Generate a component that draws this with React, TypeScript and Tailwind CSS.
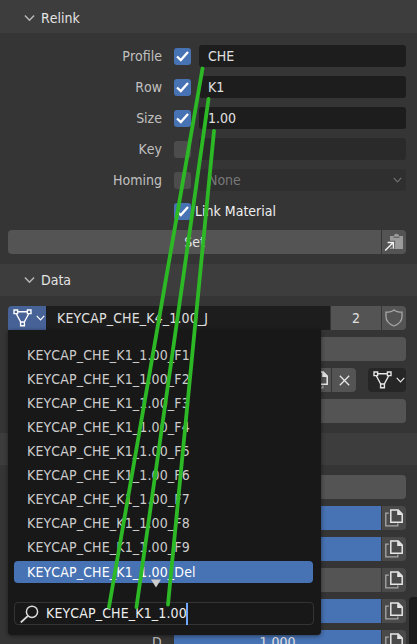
import type { ReactNode } from 'react';

const items = ['F1', 'F2', 'F3', 'F4', 'F5', 'F6', 'F7', 'F8', 'F9'];

function Chevron({ className = '' }: { className?: string }) {
  return (
    <svg className={className} viewBox="0 0 12 8" fill="none" stroke="currentColor" strokeWidth="1.6">
      <path d="M1 1.2 6 6.4 11 1.2" />
    </svg>
  );
}

function MeshIcon() {
  return (
    <svg className="h-[18px] w-[19px] shrink-0" viewBox="0 0 19 18" fill="none" stroke="currentColor" strokeWidth="1.4">
      <path d="M4.5 2.8h10M3.4 5l4.3 8M15.6 5l-4.3 8" />
      <path d="M1 1h3.6v3.6H1zM14.4 1H18v3.6h-3.6zM7.6 13h3.8v3.8H7.6z" />
    </svg>
  );
}

function CopyIcon() {
  return (
    <svg className="h-[18px] w-[18px] shrink-0" viewBox="0 0 18 18" fill="none">
      <path d="M3.8 4.2H.8v12.6h12v-2.2" stroke="#a8a8a8" strokeWidth="1.3" />
      <path d="M5.8 1h7.4l4 4v8.2H5.8z" stroke="#e6e6e6" strokeWidth="1.5" />
      <path d="M12.2.8v5.2h5.4z" fill="#e6e6e6" />
    </svg>
  );
}

function Header({ title, className }: { title: string; className: string }) {
  return (
    <div className={`flex w-full shrink-0 items-center bg-[#3d3d3d] pl-6 text-[#e4e4e4] ${className}`}>
      <Chevron className="mr-[6px] h-2 w-[11px] text-[#b8b8b8]" />
      <span>{title}</span>
    </div>
  );
}

function Check({ on }: { on: boolean }) {
  return (
    <div className={`flex h-[17px] w-[17px] shrink-0 items-center justify-center rounded-[3px] ${on ? 'bg-[#4772b3]' : 'bg-[#4c4c4c]'}`}>
      {on && (
        <svg className="h-[11px] w-[13px]" viewBox="0 0 13 11" fill="none" stroke="#fff" strokeWidth="2.3">
          <path d="M1 5.5 4.8 9 12 1" />
        </svg>
      )}
    </div>
  );
}

function PropRow({ label, on, children, field }: { label: string; on: boolean; children?: ReactNode; field: string }) {
  return (
    <div className="flex h-[22px] items-center">
      <div className="w-[162px] text-right text-[#c0c0c0]">{label}</div>
      <div className="ml-3">
        <Check on={on} />
      </div>
      <div className={`ml-2 flex h-[22px] w-[207px] items-center justify-between rounded-[3px] pr-1 pl-[9px] ${field}`}>{children}</div>
    </div>
  );
}

function SliderRow({ fill }: { fill: string }) {
  return (
    <div className="flex h-6 shrink-0 gap-px pr-[11px] pl-[174px]">
      <div className={`flex flex-1 items-center justify-center text-[#e4e4e4] ${fill}`}>1.000</div>
      <div className="flex w-6 items-center justify-center rounded-r-[4px] bg-[#4a4a4a]">
        <CopyIcon />
      </div>
    </div>
  );
}

export default function App() {
  return (
    <div className="relative h-[644px] w-[417px] overflow-hidden bg-[#353535] font-['DejaVu_Sans_Condensed','DejaVu_Sans',sans-serif] text-[14px] leading-none whitespace-nowrap [font-kerning:none] [font-stretch:condensed]">
      <div className="flex flex-col">
        <Header title="Relink" className="h-[33px] pt-[3px]" />
        <div className="flex flex-col gap-[9px] pt-3">
          <PropRow label="Profile" on field="bg-[#1d1d1d] text-[#e0e0e0]">CHE</PropRow>
          <PropRow label="Row" on field="bg-[#1d1d1d] text-[#e0e0e0]">K1</PropRow>
          <PropRow label="Size" on field="bg-[#1d1d1d] text-[#e0e0e0]">1.00</PropRow>
          <PropRow label="Key" on={false} field="bg-[#2a2a2a]" />
          <PropRow label="Homing" on={false} field="bg-[#2f2f2f] text-[#787878]">
            <span>None</span>
            <Chevron className="h-[6px] w-[9px] text-[#707070]" />
          </PropRow>
          <div className="flex h-[22px] items-center pl-[174px] text-[#f0f0f0]">
            <Check on />
            <span className="ml-1">Link Material</span>
          </div>
        </div>
        <div className="mt-2 flex h-6 gap-px pr-[11px] pl-2 text-[#e4e4e4]">
          <div className="flex flex-1 items-center justify-center rounded-l-[4px] bg-[#545454]">Set</div>
          <div className="flex w-6 items-center justify-center rounded-r-[4px] bg-[#545454]">
            <svg className="h-5 w-5" viewBox="0 0 20 20" fill="none">
              <path d="M6 4h4c0-3 5-3 5 0h4v13H6z" fill="#9b9b9b" />
              <path d="M9.5 5.2h6" stroke="#555" />
              <path d="m1.2 18.5 8-8M3.6 10.5h5.8v6" stroke="#545454" strokeWidth="3.4" />
              <path d="m1.2 18.5 8-8M3.6 10.5h5.8v6" stroke="#f0f0f0" strokeWidth="1.5" />
            </svg>
          </div>
        </div>
        <Header title="Data" className="mt-[10px] h-8" />
        <div className="mt-[10px] flex h-6 pr-[11px] pl-2 text-[#e0e0e0]">
          <div className="flex w-[38px] items-center gap-1 rounded-tl-[4px] bg-[#466297] pl-[5px] text-white">
            <MeshIcon />
            <Chevron className="h-[6px] w-[9px]" />
          </div>
          <div className="flex flex-1 items-center bg-[#1d1d1d] pl-[11px] tracking-[0.14px]">KEYCAP_CHE_K4_1.00_J</div>
          <div className="ml-px flex w-[50px] items-center justify-center bg-[#545454]">2</div>
          <div className="ml-px flex w-6 items-center justify-center rounded-r-[4px] bg-[#545454]">
            <svg className="h-[18px] w-[18px]" viewBox="0 0 18 18" fill="none" stroke="#a5a5a5" strokeWidth="1.3">
              <path d="M9 .9C7 2.6 4 3.1 1 3.1v4.5c0 4.8 3.6 7.8 8 9.4 4.4-1.6 8-4.6 8-9.4V3.1c-3 0-6-.5-8-2.2Z" />
            </svg>
          </div>
        </div>
        <div className="mt-[7px] mr-[11px] ml-2 h-6 rounded-[4px] bg-[#545454]" />
        <div className="mt-[7px] flex h-6 justify-end pr-[11px] text-[#e6e6e6]">
          <div className="flex w-6 items-center justify-end bg-[#545454] pr-[3px]">
            <CopyIcon />
          </div>
          <div className="ml-px flex w-6 items-center justify-center rounded-r-[4px] bg-[#545454]">
            <svg className="h-[11px] w-[11px]" viewBox="0 0 11 11" fill="none" stroke="currentColor" strokeWidth="1.3">
              <path d="m.8.8 9.4 9.4m0-9.4L.8 10.2" />
            </svg>
          </div>
          <div className="ml-3 flex w-[38px] items-center gap-1 rounded-[4px] bg-[#262626] pl-[5px]">
            <MeshIcon />
            <Chevron className="h-[6px] w-[9px]" />
          </div>
        </div>
        <div className="mt-[7px] mr-[11px] ml-2 h-6 rounded-[4px] bg-[#545454]" />
        <div className="mt-[10px] h-8 bg-[#3d3d3d]" />
        <div className="mt-[10px] mr-[11px] ml-2 h-6 rounded-[4px] bg-[#545454]" />
        <div className="mt-[7px] flex flex-col gap-[7px]">
          <SliderRow fill="bg-[#4772b3]" />
          <SliderRow fill="bg-[#4772b3]" />
          <SliderRow fill="bg-[#545454]" />
          <SliderRow fill="bg-[#4772b3]" />
          <div className="relative">
            <span className="absolute top-[5px] left-[152px] text-[#c0c0c0]">D</span>
            <SliderRow fill="bg-[#4772b3]" />
          </div>
        </div>
      </div>

      <div className="absolute top-[597px] right-0 h-[60px] w-2 rounded-tl-[4px] bg-[#1b1b1b]" />

      <div className="absolute top-[330px] left-2 flex h-[305px] w-[313px] flex-col rounded-b-[4px] bg-[#181818] px-[6px] pt-[13px] tracking-[0.14px] text-[#cccccc] shadow-[0_1px_4px_rgba(0,0,0,0.5)]">
        {items.map((item) => (
          <div key={item} className="flex h-6 shrink-0 items-center pl-[13px]">{`KEYCAP_CHE_K1_1.00_${item}`}</div>
        ))}
        <div className="mt-[2px] flex h-[22px] w-[299px] shrink-0 items-center rounded-[4px] bg-[#4772b3] pb-px pl-[13px] text-white">KEYCAP_CHE_K1_1.00_Del</div>
        <div className="mt-[19px] flex h-[23px] w-[300px] shrink-0 items-center rounded-[4px] border border-[#343434] pl-[5px] text-[#ededed]">
          <svg className="h-[18px] w-[19px]" viewBox="0 0 19 18" fill="none" stroke="#dcdcdc" strokeWidth="1.5">
            <circle cx="12" cy="6.8" r="5.6" />
            <path d="m8 10.9-7.2 6.5" strokeWidth="1.9" />
          </svg>
          <span className="ml-[7px] pb-[2px]">KEYCAP_CHE_K1_1.00</span>
          <span className="-ml-px h-[22px] w-[2px] bg-[#71a8ff]" />
        </div>
      </div>
      <svg className="absolute top-[579px] left-[151px] h-[9px] w-[10px]" viewBox="0 0 10 9">
        <path d="M0 .5h10L5 8.5z" fill="#cdcdcd" />
      </svg>

      <svg className="absolute inset-0 h-[644px] w-[417px]" viewBox="0 0 417 644" fill="none" stroke="#2cb925" strokeWidth="3.8" strokeLinecap="round">
        <path d="M202.5 68.5 109 607M208.5 99 136.5 607M214 131 168 604.5" />
      </svg>
    </div>
  );
}
